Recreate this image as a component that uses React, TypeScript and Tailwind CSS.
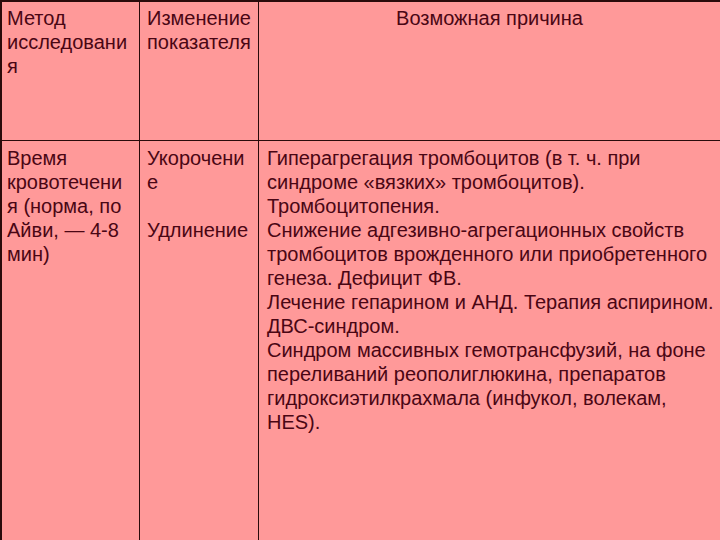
const col1Head = ["Метод", "исследовани", "я"];
const col2Head = ["Изменение", "показателя"];

const col1Body = ["Время", "кровотечени", "я (норма, по", "Айви, — 4-8", "мин)"];
const col2Body = ["Укорочени", "е", "", "Удлинение"];

const reasons = [
  "Гиперагрегация тромбоцитов (в т. ч. при",
  "синдроме «вязких» тромбоцитов).",
  "Тромбоцитопения.",
  "Снижение адгезивно-агрегационных свойств",
  "тромбоцитов врожденного или приобретенного",
  "генеза. Дефицит ФВ.",
  "Лечение гепарином и АНД. Терапия аспирином.",
  "ДВС-синдром.",
  "Синдром массивных гемотрансфузий, на фоне",
  "переливаний реополиглюкина, препаратов",
  "гидроксиэтилкрахмала (инфукол, волекам,",
  "HES).",
];

function Lines({ lines }: { lines: string[] }) {
  return (
    <>
      {lines.map((line, i) => (
        <div key={i} className="h-6 whitespace-nowrap">
          {line}
        </div>
      ))}
    </>
  );
}

export default function App() {
  return (
    <div
      className="h-[540px] w-[720px] overflow-hidden bg-[#ff9999] text-[20px] leading-6 text-[#4a0614]"
      style={{ fontFamily: '"Liberation Sans", Arial, sans-serif' }}
    >
      <div className="grid h-full grid-cols-[138px_119px_1fr] grid-rows-[139px_1fr] border-l-2 border-t-2 border-[#2a0a0a]">
        <div className="border-b border-r border-[#2a0a0a] pl-[5px] pt-[4px]">
          <Lines lines={col1Head} />
        </div>
        <div className="border-b border-r border-[#2a0a0a] pl-[7px] pt-[4px]">
          <Lines lines={col2Head} />
        </div>
        <div className="border-b border-[#2a0a0a] pt-[4px] text-center">
          Возможная причина
        </div>

        <div className="border-r border-[#2a0a0a] pl-[5px] pt-[5px]">
          <Lines lines={col1Body} />
        </div>
        <div className="border-r border-[#2a0a0a] pl-[7px] pt-[5px]">
          <Lines lines={col2Body} />
        </div>
        <div className="pl-[8px] pt-[5px]">
          <Lines lines={reasons} />
        </div>
      </div>
    </div>
  );
}
